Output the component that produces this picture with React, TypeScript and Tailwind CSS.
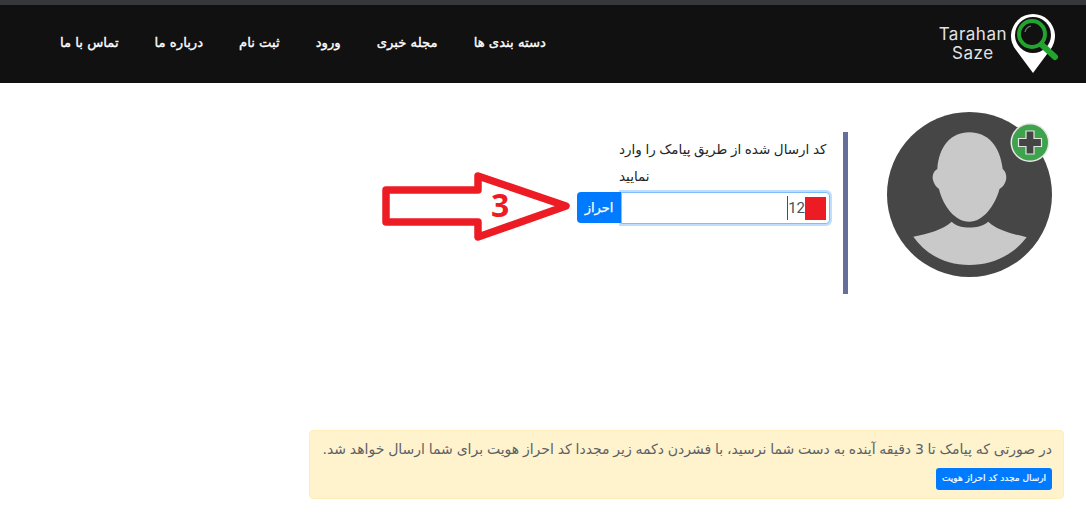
export default function App() {
  const nav = ["دسته بندی ها", "مجله خبری", "ورود", "ثبت نام", "درباره ما", "تماس با ما"];
  return (
    <div dir="rtl" className="relative h-[528px] w-full overflow-hidden bg-white font-['DejaVu_Sans',sans-serif]">
      <div className="h-[5px] bg-[#37383a]" />
      <header className="flex h-[78px] items-center justify-between bg-[#111111] pl-[60px] pr-[27px]">
        <div dir="ltr" className="flex items-center">
          <div className="flex flex-col items-center pr-[4px] font-['Inter',sans-serif] text-[17px] font-normal leading-[19px] tracking-[0.5px] text-[#e2e2e2]">
            <span>Tarahan</span>
            <span>Saze</span>
          </div>
          <svg width="48" height="62" viewBox="0 0 48 62" className="mt-[-3px]">
            <path d="M22 61 L5 38 A22 22 0 1 1 39 38 Z" fill="#ffffff" />
            <circle cx="22" cy="23" r="18" fill="#111111" />
            <path d="M31 33 L44 45" stroke="#23a42e" strokeWidth="6" strokeLinecap="round" />
            <circle cx="21" cy="22" r="13" fill="#111111" stroke="#23a42e" strokeWidth="4" />
            <path d="M14 20 A8 8 0 0 1 20 14" fill="none" stroke="#7a7a7a" strokeWidth="1.2" />
          </svg>
        </div>
        <nav className="mb-[3px] flex items-center gap-9 text-[13.2px] font-normal text-white [-webkit-text-stroke:0.35px_white]">
          {nav.map((n) => (
            <a key={n} className="whitespace-nowrap">{n}</a>
          ))}
        </nav>
      </header>

      <main className="flex h-[347px] items-start pr-[34px] pt-[29px]">
        <svg width="165" height="165" viewBox="0 0 165 165" className="shrink-0">
          <circle cx="82.5" cy="82.5" r="82.5" fill="#464646" />
          <path d="M82.3 20.3 C64 20.3 52 34 50.3 57 C46.5 59 45 64 46 68 C47 72 49 75 52 77 C56 94 68 109.7 82.3 109.7 C96 109.7 108 94 112.5 77 C116 75 118 72 119 68 C120 64 118.5 59 115.7 57 C113 34 101 20.3 82.3 20.3 Z" fill="#c9c9c9" />
          <path d="M64.7 109.7 C70 114.5 76 115.5 82.3 115.5 C89 115.5 95 114.5 101.3 109.7 C110 118 124 121.5 139.7 125.3 C125 144 105 153 82.3 153 C60 153 40 144 26.3 124.7 C42 121.5 55 118 64.7 109.7 Z" fill="#c9c9c9" />
          <circle cx="143" cy="30.5" r="19.5" fill="#e8e8e8" />
          <circle cx="143" cy="30.5" r="18" fill="#3fa34d" />
          <path d="M139 19 H147 V26.5 H154.5 V34.5 H147 V42 H139 V34.5 H131.5 V26.5 H139 Z" fill="#444444" stroke="#e4e4e4" strokeWidth="1.2" />
        </svg>

        <div className="mr-[39px] mt-[20px] h-[162px] w-[271px] border-r-[5px] border-[#666f9c] pr-[13px]">
          <p className="mr-[3px] w-[208px] pt-[4px] text-left text-[13.5px] leading-[27px] text-[#212529] [word-spacing:-0.7px]">
            کد ارسال شده از طریق پیامک را وارد نمایید
          </p>
          <div className="mt-[2px] flex h-[32px] w-[253px]">
            <div className="flex h-[32px] w-[209px] items-center rounded-r-[4px] border border-[#80bdff] bg-white pr-[3px] shadow-[0_0_0_2px_rgba(0,123,255,0.25)]">
              <span className="h-[23px] w-[21px] bg-[#ed1c24]" />
              <span className="font-['Roboto',sans-serif] text-[15px] text-[#495057]">12</span>
              <span className="h-[24px] w-px bg-[#495057]" />
            </div>
            <button className="flex h-[31px] w-[44px] items-center justify-center rounded-l-[4px] bg-[#007bff] text-[13px] text-white [-webkit-text-stroke:0.25px_white]">
              احراز
            </button>
          </div>
        </div>
      </main>

      <section className="ml-[309px] mr-[22px] h-[69px] rounded-[4px] border border-[#ffeeba] bg-[#fff3cd] pl-[12px] pr-[11px] pt-[6px] text-[#5c6166]">
        <p className="whitespace-nowrap text-[14px] leading-[24px] [word-spacing:-0.65px]">
          در صورتی که پیامک تا 3 دقیقه آینده به دست شما نرسید، با فشردن دکمه زیر مجددا کد احراز هویت برای شما ارسال خواهد شد.
        </p>
        <button className="mt-[7px] flex h-[22px] w-[116px] items-center justify-center whitespace-nowrap rounded-[3px] bg-[#007bff] text-[9px] font-normal text-white [-webkit-text-stroke:0.2px_white]">
          ارسال مجدد کد احراز هویت
        </button>
      </section>

      <svg width="200" height="80" viewBox="0 0 200 80" className="absolute left-[380px] top-[167px]">
        <path d="M6 23 H98 V9 L186 39 L98 70 V55 H6 Z" fill="none" stroke="#ed1c24" strokeWidth="7.5" strokeLinejoin="round" />
      </svg>
      <span dir="ltr" className="absolute left-[491px] top-[183px] font-['Open_Sans',sans-serif] text-[32px] font-bold leading-[44px] text-[#ed1c24]">3</span>
    </div>
  );
}
